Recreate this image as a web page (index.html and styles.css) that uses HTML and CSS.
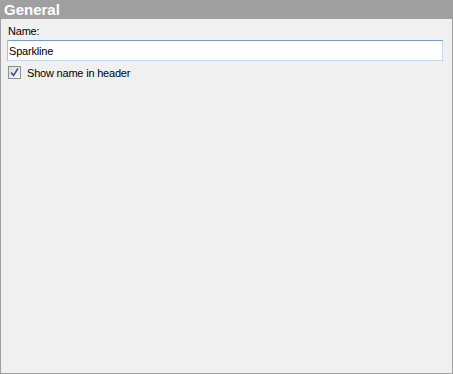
FILE: index.html
```html
<!DOCTYPE html>
<html lang="en">
<head>
    <meta charset="UTF-8">
    <title>General</title>
    <link rel="stylesheet" href="styles.css">
</head>
<body>
    <div class="panel">
        <div class="header">General</div>
        <div class="content">
            <label class="field-label" for="name">Name:</label>
            <input class="name-input" type="text" id="name" value="Sparkline">
            <label class="check-row">
                <span class="checkbox">
                    <svg width="9" height="9" viewBox="0 0 9 9">
                        <path d="M1 4.5 L3.5 7.5 L8 0.5" fill="none" stroke="#3a4fa8" stroke-width="1.6"/>
                    </svg>
                </span>
                Show name in header
            </label>
        </div>
    </div>
</body>
</html>
```

FILE: styles.css
```css
html, body {
    margin: 0;
    padding: 0;
}
body {
    font-family: "Liberation Sans", Arial, sans-serif;
    font-size: 11px;
    letter-spacing: -0.2px;
    color: #000;
    background: #fff;
}
.panel {
    width: 453px;
    height: 374px;
    box-sizing: border-box;
    border: 1px solid #a0a0a0;
    border-top: none;
    background: #f0f0f0;
    display: flex;
    flex-direction: column;
}
.header {
    height: 19px;
    line-height: 19px;
    background: #a0a0a0;
    color: #fff;
    font-weight: bold;
    font-size: 15px;
    letter-spacing: 0;
    padding-left: 4px;
    margin: 0 -1px;
}
.content {
    padding: 4px 9px 0 6px;
    display: flex;
    flex-direction: column;
}
.field-label {
    height: 15px;
    line-height: 15px;
    padding-left: 1px;
    margin-top: 1px;
}
.name-input {
    height: 21px;
    box-sizing: border-box;
    margin: 1px 0 0 0;
    border: 1px solid #c5daed;
    border-top-color: #7a9cc0;
    border-left-color: #a9c3dc;
    background: #fff;
    font-family: inherit;
    font-size: 11px;
    letter-spacing: -0.2px;
    padding: 0 1px;
    outline: none;
}
.check-row {
    display: flex;
    align-items: center;
    gap: 6px;
    margin-top: 5px;
    padding-left: 1px;
    height: 13px;
}
.checkbox {
    width: 11px;
    height: 11px;
    border: 1px solid #8e8f8f;
    background: linear-gradient(135deg, #dcdcdc, #f8f8f8);
    display: flex;
    align-items: center;
    justify-content: center;
}
```
